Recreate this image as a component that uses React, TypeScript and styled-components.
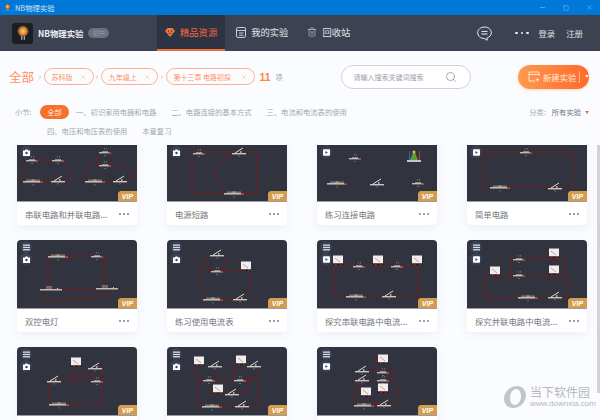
import React from "react";
import styled, { createGlobalStyle } from "styled-components";
import { Minus, Square, X, Search, Trash2, ChevronRight } from "lucide-react";

const Global = createGlobalStyle`
  html, body { margin: 0; padding: 0; width: 600px; height: 420px; overflow: hidden; background: #fbfcff; }
  * { box-sizing: border-box; }
  body { font-family: "Noto Sans CJK SC", "Noto Sans", sans-serif; }
`;

const Page = styled.div`
  position: relative;
  width: 600px;
  height: 420px;
  display: flex;
  flex-direction: column;
  overflow: hidden;
  background: #fbfcff;
`;
const TitleBar = styled.div`
  height: 15px;
  flex: none;
  background: #0078d7;
  display: flex;
  align-items: center;
  padding: 0 7px 0 3px;
  color: #cfe6fa;
  font-size: 7.4px;
`;
const TitleText = styled.span`
  margin-left: 3px;
  flex: 1;
`;
const WinButtons = styled.div`
  display: flex;
  gap: 17px;
  align-items: center;
  color: #e8f3fc;
`;
const Nav = styled.div`
  height: 36px;
  flex: none;
  background: #3c4252;
  display: flex;
  align-items: stretch;
  color: #e4e6ea;
`;
const Brand = styled.div`
  width: 157px;
  flex: none;
  display: flex;
  align-items: center;
  padding-left: 12px;
`;
const LogoBox = styled.div`
  width: 21px;
  height: 21px;
  border-radius: 3px;
  background: #1d1e22;
  display: flex;
  align-items: center;
  justify-content: center;
`;
const BrandName = styled.span`
  margin-left: 5px;
  font-size: 8.4px;
  font-weight: 700;
  color: #f0f1f3;
`;
const GradeBadge = styled.span`
  margin-left: 5px;
  width: 21px;
  height: 10px;
  border-radius: 5px;
  background: #6c7180;
  color: #969aa6;
  font-size: 6px;
  line-height: 10px;
  text-align: center;
`;
const Tabs = styled.div`
  display: flex;
  gap: 3px;
`;
const Tab = styled.div<{ $active?: boolean }>`
  display: flex;
  align-items: center;
  gap: 5px;
  padding: 0 8px;
  font-size: 9.3px;
  background: ${(p) => (p.$active ? "#2d3343" : "transparent")};
  color: ${(p) => (p.$active ? "#f0693a" : "#e2e4e8")};
  border-bottom: 2px solid ${(p) => (p.$active ? "#f26a2e" : "transparent")};
`;
const NavRight = styled.div`
  margin-left: auto;
  display: flex;
  align-items: center;
  padding-right: 17px;
  font-size: 8.4px;
  color: #dfe1e6;
`;
const NavDots = styled.div`
  display: flex;
  gap: 3px;
  margin: 0 10px 0 23px;
`;
const Dot = styled.i<{ $color: string; $size: number }>`
  display: block;
  width: ${(p) => p.$size}px;
  height: ${(p) => p.$size}px;
  border-radius: 50%;
  background: ${(p) => p.$color};
`;
const NavLink = styled.span`
  & + & {
    margin-left: 11px;
  }
`;
const FilterRow = styled.div`
  height: 47px;
  flex: none;
  display: flex;
  align-items: center;
  padding: 4px 11px 0 9px;
`;
const AllLabel = styled.span`
  flex: none;
  width: 27px;
  font-size: 12.5px;
  color: #ff8d5e;
  white-space: nowrap;
`;
const Sep = styled.span`
  flex: none;
  display: flex;
  width: 7.5px;
  justify-content: center;
  color: #c08d74;
`;
const Chip = styled.div<{ $w: number }>`
  flex: none;
  width: ${(p) => p.$w}px;
  height: 17px;
  border: 1px solid #ffae8a;
  border-radius: 9px;
  display: flex;
  align-items: center;
  justify-content: space-between;
  padding: 0 6px 0 7px;
  font-size: 7px;
  color: #ff8d5e;
  white-space: nowrap;
`;
const Count = styled.span`
  margin-left: 5px;
  font-family: "Liberation Sans", sans-serif;
  font-size: 10.5px;
  font-weight: 700;
  color: #ff8838;
`;
const CountUnit = styled.span`
  margin-left: 5px;
  font-size: 7px;
  color: #9b9fa9;
`;
const SearchBox = styled.div`
  margin-left: 58px;
  flex: none;
  width: 130px;
  height: 24px;
  border: 1px solid #cdd1dc;
  border-radius: 12px;
  background: #fff;
  display: flex;
  align-items: center;
  justify-content: space-between;
  padding: 0 13px 0 12px;
  font-size: 7px;
  color: #9a9ea8;
`;
const NewButton = styled.div`
  margin-left: auto;
  flex: none;
  width: 71px;
  height: 24px;
  border-radius: 12px;
  background: linear-gradient(90deg, #ff9a4f, #ff6a2c);
  display: flex;
  align-items: center;
  padding-left: 10px;
  color: #ffe9dc;
  font-size: 8.4px;
  box-shadow: 0 1px 3px rgba(255, 120, 50, 0.3);
`;
const NewLabel = styled.span`
  margin-left: 3px;
  padding-right: 2px;
  border-right: 1px solid rgba(255, 255, 255, 0.45);
  line-height: 12px;
  white-space: nowrap;
`;
const Caret = styled.i<{ $color: string }>`
  display: block;
  width: 0;
  height: 0;
  border: 2.8px solid transparent;
  border-bottom: none;
  border-top: 3px solid ${(p) => p.$color};
`;
const ButtonCaret = styled(Caret)`
  margin-left: 5px;
`;
const Sections = styled.div`
  height: 47px;
  flex: none;
  font-size: 7.3px;
  color: #a3a7b1;
`;
const SectionRow = styled.div<{ $left: number; $h: number }>`
  height: ${(p) => p.$h}px;
  display: flex;
  align-items: center;
  padding-left: ${(p) => p.$left}px;
`;
const SectionLabel = styled.span`
  width: 25px;
`;
const AllPill = styled.span`
  width: 29px;
  height: 14px;
  border-radius: 7px;
  background: #f7702c;
  color: #ffe9de;
  line-height: 14px;
  text-align: center;
  margin-right: 7px;
`;
const SectionItem = styled.span`
  margin-right: 15px;
  white-space: nowrap;
`;
const SortBox = styled.div`
  margin-left: auto;
  display: flex;
  align-items: center;
  padding-right: 11px;
`;
const SortValue = styled.span`
  margin: 0 4px 0 6px;
  color: #6e727c;
`;
const Scroller = styled.div`
  flex: 1;
  min-height: 0;
  overflow: hidden;
`;
const Grid = styled.div`
  margin-top: -12px;
  padding-left: 17px;
  display: grid;
  grid-template-columns: repeat(4, 120px);
  column-gap: 30px;
  row-gap: 15px;
`;
const CardBox = styled.div`
  width: 120px;
  height: 92px;
  background: #fff;
  border-radius: 4px;
  overflow: hidden;
  box-shadow: 0 3px 8px rgba(90, 105, 150, 0.09);
`;
const Thumb = styled.div`
  position: relative;
  height: 69px;
  background: #31343f;
  border-bottom: 1px solid #9a9ca3;
`;
const ThumbTools = styled.div`
  position: absolute;
  left: 3px;
  top: 1px;
  display: flex;
  flex-direction: column;
  gap: 0;
`;
const ToolDot = styled.div`
  width: 12px;
  height: 12px;
  border-radius: 50%;
  background: #3a4154;
  display: flex;
  align-items: center;
  justify-content: center;
`;
const VipBadge = styled.div`
  position: absolute;
  right: 0;
  bottom: 0;
  width: 19px;
  height: 10px;
  background: #d49c4e;
  clip-path: polygon(2px 0, 100% 0, 100% 100%, 0 100%, 0 2px);
  color: #fff;
  font-family: "Liberation Sans", sans-serif;
  font-size: 7px;
  font-weight: 700;
  font-style: italic;
  line-height: 11px;
  text-align: center;
`;
const CardFooter = styled.div`
  height: 23px;
  display: flex;
  align-items: center;
  padding: 0 8px;
  font-size: 8.4px;
  color: #75787e;
`;
const CardTitle = styled.span`
  flex: 1;
  white-space: nowrap;
`;
const CardDots = styled.div`
  display: flex;
  gap: 2px;
`;
const ScrollThumb = styled.div`
  position: absolute;
  right: 0;
  top: 145px;
  width: 3px;
  height: 248px;
  background: #d2d3d6;
`;
const Watermark = styled.div`
  position: absolute;
  left: 503px;
  top: 385px;
  display: flex;
  align-items: center;
  gap: 3px;
  color: #a9abb0;
  opacity: 0.85;
`;
const WaterText = styled.div`
  display: flex;
  flex-direction: column;
  line-height: 1;
`;
const WaterCn = styled.span`
  font-size: 12px;
`;
const WaterEn = styled.span`
  font-family: "Liberation Sans", sans-serif;
  font-size: 8px;
  margin-top: 2px;
`;

const Bulb = ({ x, y }: { x: number; y: number }) => (
  <g>
    <rect x={x - 6} y={y} width={12} height={1.4} fill="#bdbcb6" />
    <rect x={x - 3} y={y - 1} width={6} height={1} fill="#8f8f8c" />
    <rect x={x - 1} y={y - 3.5} width={0.8} height={0.8} fill="#bbb" />
    <rect x={x + 1} y={y - 3.5} width={0.8} height={0.8} fill="#bbb" />
    <rect x={x - 1} y={y + 3} width={2} height={0.8} fill="#777" />
    <rect x={x + 3.5} y={y} width={2.5} height={1.4} fill="#a44" />
  </g>
);
const Switch = ({ x, y }: { x: number; y: number }) => (
  <g>
    <rect x={x - 7} y={y + 1} width={14} height={1.4} fill="#c8c7c0" />
    <path d={`M${x - 4} ${y + 1}L${x + 4} ${y - 4}`} stroke="#dedcd5" strokeWidth={1} />
    <rect x={x + 1} y={y - 1} width={1.5} height={2} fill="#aaa" />
    <rect x={x - 1} y={y + 3.5} width={2} height={0.8} fill="#777" />
  </g>
);
const Battery = ({ x, y }: { x: number; y: number }) => (
  <g>
    <rect x={x - 10} y={y} width={20} height={1.6} fill="#bdbcb6" />
    <rect x={x - 7} y={y - 1.5} width={14} height={1.5} fill="#77777a" />
    <rect x={x - 1.5} y={y - 1.5} width={3} height={1.5} fill="#d9944e" />
    <rect x={x + 7} y={y} width={3} height={1.6} fill="#a33" />
    <rect x={x - 1} y={y + 3.5} width={2} height={0.8} fill="#777" />
  </g>
);
const Meter = ({ x, y }: { x: number; y: number }) => (
  <g>
    <rect x={x - 5} y={y - 4.5} width={10} height={8} fill="#eeeeee" />
    <path d={`M${x - 3} ${y - 2}L${x + 2} ${y + 2}`} stroke="#c55" strokeWidth={0.6} />
    <rect x={x - 5} y={y + 3.5} width={10} height={1.3} fill="#1b1b1f" />
    <rect x={x - 3} y={y + 3.5} width={1.5} height={1.3} fill="#b33" />
    <rect x={x + 2} y={y + 3.5} width={1.5} height={1.3} fill="#b33" />
  </g>
);
const DoubleSwitch = ({ x, y }: { x: number; y: number }) => (
  <g>
    <rect x={x - 11} y={y} width={22} height={1.5} fill="#bdbcb6" />
    <rect x={x - 5} y={y - 3} width={6} height={3} fill="#6f6f72" />
    <rect x={x - 3.5} y={y - 1.5} width={3} height={1.5} fill="#a44" />
    <rect x={x + 6} y={y - 1} width={1} height={1} fill="#ccc" />
  </g>
);
const Gem = () => (
  <svg width="10" height="10" viewBox="0 0 10 10">
    <path d="M2.5 1h5L10 4 5 10 0 4z" fill="#ee7a3c" />
    <circle cx="3.4" cy="4" r="0.8" fill="#2d3343" />
    <circle cx="6.6" cy="4" r="0.8" fill="#2d3343" />
    <path d="M3.5 6.3h3" stroke="#2d3343" strokeWidth="0.8" />
  </svg>
);
const NoteIcon = () => (
  <svg width="10" height="11" viewBox="0 0 10 11" fill="none" stroke="#d8dade" strokeWidth="0.9">
    <rect x="0.5" y="0.5" width="9" height="10" rx="1.5" />
    <path d="M0.5 3.5h9M3 6h4.5M3 8.3h4.5" />
  </svg>
);
const ChatIcon = () => (
  <svg width="15" height="15" viewBox="0 0 15 15" fill="none" stroke="#eceef1" strokeWidth="1">
    <path d="M7.5 1C3.6 1 .7 3.5.7 6.8c0 3.3 2.9 5.7 6.8 5.7l2.6 1.8v-2.3c2.5-.9 4.2-2.9 4.2-5.2C14.300 3.500 11.400 1 7.500 1z" />
    <path d="M4.500 5.400h6M4.500 8h6" />
  </svg>
);
const BulbLogo = ({ s }: { s: number }) => (
  <svg width={s} height={s} viewBox="0 0 20 20">
    <defs>
      <radialGradient id={`glow${s}`}>
        <stop offset="0" stopColor="#ffcf7a" />
        <stop offset="0.6" stopColor="#d98a35" />
        <stop offset="1" stopColor="#6e4a25" />
      </radialGradient>
    </defs>
    <circle cx="10" cy="8" r="6" fill={`url(#glow${s})`} />
    <rect x="8" y="13.500" width="1.200" height="4" fill="#c9c9c9" />
    <rect x="10.800" y="13.500" width="1.200" height="4" fill="#c9c9c9" />
  </svg>
);
const NewIcon = () => (
  <svg width="12" height="11" viewBox="0 0 12 11" fill="none" stroke="#ffeee3" strokeWidth="0.9">
    <path d="M11 5V1H1v9h6M1 3.500h10" />
    <path d="M9.500 7v3.500M7.800 8.800h3.500" />
  </svg>
);
const ListIcon = () => (
  <svg width="7" height="7" viewBox="0 0 7 7" fill="#d9dce3">
    <rect x="0" y="0.500" width="7" height="1.300" />
    <rect x="0" y="2.800" width="7" height="1.300" />
    <rect x="0" y="5.100" width="7" height="1.300" />
  </svg>
);
const CameraIcon = () => (
  <svg width="7" height="7" viewBox="0 0 7 7">
    <path d="M0 1.500h2L2.500.500h2l.5 1h2V7H0z" fill="#fff" />
    <circle cx="3.500" cy="4" r="1.200" fill="#3a4154" />
  </svg>
);
const VideoIcon = () => (
  <svg width="7" height="7" viewBox="0 0 7 7">
    <rect width="7" height="6.500" y="0.300" rx="1" fill="#fff" />
    <path d="M2.500 2l2.300 1.500-2.300 1.500z" fill="#3a4154" />
  </svg>
);

type Kind = "b" | "s" | "e" | "m" | "d";
type Part = [Kind, number, number];
type CardData = {
  title?: string;
  video?: boolean;
  wires: string[];
  parts: Part[];
  fancy?: boolean;
};

const cards: CardData[] = [
  {
    title: "串联电路和并联电路...",
    wires: [
      "M16 48H6C4 38 8 27 15 27H41C51 27 56 38 54 48H41",
      "M24 48H38",
      "M69 48V38C69 34 72 32 82 32H94C108 32 114 34 114 48H103M69 48H78M86 48H100",
      "M83 19C79 23 80 30 84 32M93 19C97 23 96 30 92 32",
    ],
    parts: [["b", 15, 27], ["b", 41, 27], ["e", 16, 48], ["s", 41, 47], ["b", 88, 19], ["b", 88, 32], ["e", 78, 48], ["s", 103, 47]],
  },
  {
    title: "电源短路",
    wires: ["M25 19H90V60H25ZM63 24C54 28 46 34 48 42C50 48 55 54 55 60"],
    parts: [["b", 32, 20], ["s", 72, 19], ["e", 67, 60]],
  },
  {
    title: "练习连接电路",
    video: true,
    fancy: true,
    wires: [],
    parts: [["b", 38, 25], ["e", 20, 50], ["s", 60, 50], ["b", 101, 50]],
  },
  {
    title: "简单电路",
    video: true,
    wires: ["M17 54V19H106V54H17"],
    parts: [["b", 59, 19], ["e", 33, 54], ["s", 88, 54]],
  },
  {
    title: "双控电灯",
    wires: ["M31 16H88V48M31 16V49H90", "M25 50C22 58 26 61 40 60C60 57 80 62 100 49"],
    parts: [["e", 41, 16], ["b", 80, 16], ["d", 34, 49], ["d", 90, 48]],
  },
  {
    title: "练习使用电流表",
    wires: [
      "M50 31C36 28 36 18 44 15M50 31C62 28 62 18 56 15",
      "M50 31C42 28 32 24 33 32C33 44 34 58 46 59H73C80 58 82 50 84 32",
      "M50 31H73C76 30 78 28 79 26",
    ],
    parts: [["s", 50, 14], ["b", 50, 31], ["m", 79, 26], ["e", 46, 59], ["s", 73, 58]],
  },
  {
    title: "探究串联电路中电流...",
    video: true,
    wires: ["M17 26H101V57H72M17 26V57H39M44 57H66"],
    parts: [["m", 21, 20], ["b", 42, 26], ["m", 61, 20], ["b", 80, 26], ["m", 100, 20], ["e", 39, 56], ["s", 72, 55]],
  },
  {
    title: "探究并联电路中电流...",
    video: true,
    wires: ["M44 36V19H98V36H18V58H100V36"],
    parts: [["b", 52, 19], ["m", 87, 13], ["b", 52, 35], ["m", 87, 30], ["m", 28, 31], ["e", 61, 57], ["s", 88, 56]],
  },
  {
    wires: ["M32 33H85V57H32ZM55 15V27H78V20H85V33M55 27V33"],
    parts: [["m", 59, 15], ["s", 78, 20], ["s", 37, 33], ["b", 80, 34], ["e", 42, 57]],
  },
  {
    wires: [
      "M30 33H92V59H30ZM26 18C27 28 34 33 42 33C50 30 50 24 50 18",
      "M68 18V33M92 18C92 26 88 33 73 33M44 42V46H62M80 33V46H68",
    ],
    parts: [["m", 32, 14], ["s", 48, 18], ["m", 74, 13], ["s", 87, 18], ["b", 42, 33], ["b", 73, 33], ["m", 51, 42], ["s", 65, 46], ["e", 45, 59], ["s", 75, 58]],
  },
  {
    video: true,
    wires: ["M45 24H76V33H39V58H80C82 50 80 42 76 38M60 24V8M43 33V45M62 38C58 44 62 48 72 48", "M55 58C60 54 64 54 67 58"],
    parts: [["m", 66, 12], ["s", 45, 23], ["b", 66, 25], ["s", 45, 32], ["b", 66, 33], ["m", 49, 45], ["m", 66, 41], ["e", 47, 58], ["s", 67, 57]],
  },
];

const renderPart = ([k, x, y]: Part, i: number) => {
  if (k === "b") return <Bulb key={i} x={x} y={y} />;
  if (k === "s") return <Switch key={i} x={x} y={y} />;
  if (k === "e") return <Battery key={i} x={x} y={y} />;
  if (k === "m") return <Meter key={i} x={x} y={y} />;
  return <DoubleSwitch key={i} x={x} y={y} />;
};

const Card = ({ d }: { d: CardData }) => (
  <CardBox>
    <Thumb>
      <svg width="120" height="68" viewBox="0 0 120 68">
        <g fill="none" stroke="#7d1a1a" strokeWidth="0.8">
          {d.wires.map((w, i) => (
            <path key={i} d={w} />
          ))}
        </g>
        {d.parts.map(renderPart)}
        {d.fancy && (
          <g>
            <rect x="90" y="27" width="14" height="2" fill="#c7c6c0" />
            <path d="M97 17l-4 10h8z" fill="#5d9a38" />
            <rect x="92" y="18" width="1" height="9" fill="#2f63c7" />
            <rect x="102" y="18" width="1" height="9" fill="#c73a2f" />
            <circle cx="97" cy="19" r="1.500" fill="#e2c23a" />
          </g>
        )}
      </svg>
      <ThumbTools>
        <ToolDot>
          <ListIcon />
        </ToolDot>
        <ToolDot>{d.video ? <VideoIcon /> : <CameraIcon />}</ToolDot>
      </ThumbTools>
      <VipBadge>VIP</VipBadge>
    </Thumb>
    {d.title && (
      <CardFooter>
        <CardTitle>{d.title}</CardTitle>
        <CardDots>
          <Dot $color="#7d8088" $size={2} />
          <Dot $color="#7d8088" $size={2} />
          <Dot $color="#7d8088" $size={2} />
        </CardDots>
      </CardFooter>
    )}
  </CardBox>
);

const Arrow = () => (
  <Sep>
    <ChevronRight size={6} strokeWidth={2} />
  </Sep>
);

export default function App() {
  return (
    <Page>
      <Global />
      <TitleBar>
        <BulbLogo s={9} />
        <TitleText>NB物理实验</TitleText>
        <WinButtons>
          <Minus size={7} strokeWidth={1.2} />
          <Square size={6} strokeWidth={1.2} />
          <X size={7} strokeWidth={1.2} />
        </WinButtons>
      </TitleBar>
      <Nav>
        <Brand>
          <LogoBox>
            <BulbLogo s={18} />
          </LogoBox>
          <BrandName>NB物理实验</BrandName>
          <GradeBadge>初中</GradeBadge>
        </Brand>
        <Tabs>
          <Tab $active>
            <Gem />
            精品资源
          </Tab>
          <Tab>
            <NoteIcon />
            我的实验
          </Tab>
          <Tab>
            <Trash2 size={10} strokeWidth={1.3} />
            回收站
          </Tab>
        </Tabs>
        <NavRight>
          <ChatIcon />
          <NavDots>
            <Dot $color="#eceef1" $size={2.5} />
            <Dot $color="#eceef1" $size={2.5} />
            <Dot $color="#eceef1" $size={2.5} />
          </NavDots>
          <NavLink>登录</NavLink>
          <NavLink>注册</NavLink>
        </NavRight>
      </Nav>
      <FilterRow>
        <AllLabel>全部</AllLabel>
        <Arrow />
        <Chip $w={50}>
          苏科版
          <X size={8} strokeWidth={1} />
        </Chip>
        <Arrow />
        <Chip $w={57}>
          九年级上
          <X size={8} strokeWidth={1} />
        </Chip>
        <Arrow />
        <Chip $w={89}>
          第十三章 电路初探
          <X size={8} strokeWidth={1} />
        </Chip>
        <Count>11</Count>
        <CountUnit>项</CountUnit>
        <SearchBox>
          请输入搜索关键词搜索
          <Search size={12} strokeWidth={1.2} color="#70747e" />
        </SearchBox>
        <NewButton>
          <NewIcon />
          <NewLabel>新建实验</NewLabel>
          <ButtonCaret $color="#ffe9dc" />
        </NewButton>
      </FilterRow>
      <Sections>
        <SectionRow $left={15} $h={28}>
          <SectionLabel>小节:</SectionLabel>
          <AllPill>全部</AllPill>
          <SectionItem>一、初识家用电器和电路</SectionItem>
          <SectionItem>二、电路连接的基本方式</SectionItem>
          <SectionItem>三、电流和电流表的使用</SectionItem>
          <SortBox>
            分类:
            <SortValue>所有实验</SortValue>
            <Caret $color="#f7702c" />
          </SortBox>
        </SectionRow>
        <SectionRow $left={47} $h={9}>
          <SectionItem>四、电压和电压表的使用</SectionItem>
          <SectionItem>本章复习</SectionItem>
        </SectionRow>
      </Sections>
      <Scroller>
        <Grid>
          {cards.map((c, i) => (
            <Card key={i} d={c} />
          ))}
        </Grid>
      </Scroller>
      <ScrollThumb />
      <Watermark>
        <svg width="24" height="24" viewBox="0 0 24 24">
          <path d="M14 1C7 1 1 7 1 14c0 5 4 9 9 9 7 0 13-6 13-13 0-5-4-9-9-9zm-2 19c-3 0-5-3-5-7 0-5 3-9 6-9 3 0 5 3 5 7 0 5-3 9-6 9z" fill="#b9bbc0" />
        </svg>
        <WaterText>
          <WaterCn>当下软件园</WaterCn>
          <WaterEn>www.downxia.com</WaterEn>
        </WaterText>
      </Watermark>
    </Page>
  );
}
